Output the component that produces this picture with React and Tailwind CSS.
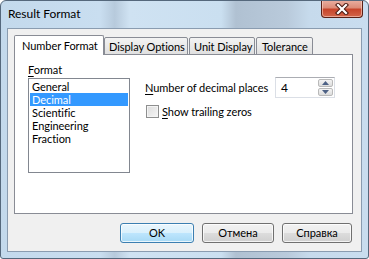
import React from 'react';

const formats = ['General', 'Decimal', 'Scientific', 'Engineering', 'Fraction'];

function CloseButton() {
  return (
    <div className="w-[42px] h-[18px] -mt-px rounded-b-[4px] border border-t-0 border-[#5a2016] bg-[linear-gradient(#eab0a2_0%,#dc8c78_45%,#c7452b_55%,#d2654a_100%)] shadow-[inset_0_0_0_1px_rgba(255,220,210,0.55)] flex items-center justify-center">
      <svg width="14" height="12" viewBox="0 0 14 12">
        <path d="M3 2 L11 10 M11 2 L3 10" stroke="#4a1a12" strokeWidth="4.2" strokeLinecap="square" />
        <path d="M3 2 L11 10 M11 2 L3 10" stroke="#ffffff" strokeWidth="2.2" strokeLinecap="square" />
      </svg>
    </div>
  );
}

function DlgButton({ children, width, primary }) {
  const look = primary
    ? 'border-[#3c7fb1] bg-[linear-gradient(#eaf6fd_0%,#d9f0fc_50%,#bee6fd_50%,#a7d9f5_100%)]'
    : 'border-[#707070] bg-[linear-gradient(#f2f2f2_0%,#ebebeb_50%,#dddddd_50%,#cfcfcf_100%)]';
  return (
    <button
      type="button"
      className={`${width} h-[20px] rounded-[3px] border ${look} shadow-[inset_0_0_0_1px_rgba(255,255,255,0.75)] leading-[14px] text-black whitespace-nowrap`}
    >
      {children}
    </button>
  );
}

export default function App() {
  return (
    <div className="w-[369px] h-[259px] flex flex-col rounded-t-[6px] rounded-b-[3px] border border-[#55687c] bg-[linear-gradient(90deg,#c3d9ec_0%,#c9def0_27%,#b7cadc_31%,#cfe2f2_35%,#cadff0_60%,#b0c1d2_64%,#b9cadb_78%,#c6daec_84%,#c9ddef_100%)] font-['Lato',sans-serif] text-[11px] tracking-[-0.05px] text-black overflow-hidden whitespace-nowrap">
      {/* title bar */}
      <div className="h-[27px] flex items-start justify-between pl-[7px] pr-[5px]">
        <span className="pt-[5px] text-[12px] leading-[15px]">Result Format</span>
        <CloseButton />
      </div>

      {/* client area */}
      <div className="flex-1 px-[6px] pb-[6px]">
        <div className="h-full border border-[#8a9cb0] bg-[#f0f0f0] flex flex-col">
          <div className="pl-[6px] pt-[6px]">
            {/* tabs */}
            <div className="flex items-end h-[20px] -mb-px">
              <div className="relative z-10 w-[90px] h-[20px] border border-b-0 border-[#898c95] bg-white leading-[15px] pl-[7px] pt-[2px] rounded-t-[2px]">
                Number Format
              </div>
              <div className="w-[84px] h-[18px] border border-[#898c95] bg-[linear-gradient(#f3f3f3,#e0e0e0)] leading-[15px] pl-[4px] pt-[1px] rounded-t-[2px]">
                Display Options
              </div>
              <div className="w-[66px] h-[18px] ml-px border border-[#898c95] bg-[linear-gradient(#f3f3f3,#e0e0e0)] leading-[15px] pl-[4px] pt-[1px] rounded-t-[2px]">
                Unit Display
              </div>
              <div className="w-[57px] h-[18px] ml-px border border-[#898c95] bg-[linear-gradient(#f3f3f3,#e0e0e0)] leading-[15px] pl-[5px] pt-[1px] rounded-t-[2px]">
                Tolerance
              </div>
            </div>

            {/* tab page */}
            <div className="w-[339px] h-[160px] border border-[#898c95] bg-white flex pl-[13px]">
              <div className="pt-[7px] flex flex-col">
                <div className="h-[15px] leading-[15px]">
                  <span className="underline underline-offset-2">F</span>ormat
                </div>
                <div className="mt-px w-[102px] h-[95px] border border-[#828790] bg-white px-px pt-px">
                  {formats.map((f) => (
                    <div
                      key={f}
                      className={`h-[13px] leading-[13px] pl-[2px] ${f === 'Decimal' ? 'bg-[#3399ff] text-white' : ''}`}
                    >
                      {f}
                    </div>
                  ))}
                </div>
              </div>

              <div className="ml-[15px] pt-[22px] flex flex-col">
                <div className="flex items-center h-[21px]">
                  <span className="w-[130px] leading-[15px]">
                    <span className="underline underline-offset-2">N</span>umber of decimal places
                  </span>
                  <div className="w-[60px] h-[21px] border border-[#dbdfe6] border-t-[#abadb3] bg-white flex">
                    <span className="flex-1 pl-[5px] leading-[19px] text-[12px]">4</span>
                    <div className="w-[16px] flex flex-col py-px pr-px gap-px">
                      <div className="flex-1 border border-[#b9b9b9] rounded-[2px] bg-[linear-gradient(#f4f4f4,#dcdcdc)] flex items-center justify-center">
                        <svg width="7" height="4" viewBox="0 0 7 4"><path d="M0 4 L3.5 0 L7 4 Z" fill="#4d6185" /></svg>
                      </div>
                      <div className="flex-1 border border-[#b9b9b9] rounded-[2px] bg-[linear-gradient(#f4f4f4,#dcdcdc)] flex items-center justify-center">
                        <svg width="7" height="4" viewBox="0 0 7 4"><path d="M0 0 L7 0 L3.5 4 Z" fill="#4d6185" /></svg>
                      </div>
                    </div>
                  </div>
                </div>
                <div className="mt-[6px] flex items-center h-[15px]">
                  <span className="w-[13px] h-[13px] ml-px border border-[#8e8f8f] bg-[linear-gradient(135deg,#dcdcdc,#f6f6f6)] shadow-[inset_0_0_0_1px_#f4f4f4]" />
                  <span className="ml-[3px] leading-[15px]">
                    <span className="underline underline-offset-2">S</span>how trailing zeros
                  </span>
                </div>
              </div>
            </div>
          </div>

          {/* buttons */}
          <div className="mt-[9px] pr-[9px] flex justify-end gap-[8px]">
            <DlgButton width="w-[74px]" primary>OK</DlgButton>
            <DlgButton width="w-[72px]">Отмена</DlgButton>
            <DlgButton width="w-[70px]">Справка</DlgButton>
          </div>
        </div>
      </div>
    </div>
  );
}
